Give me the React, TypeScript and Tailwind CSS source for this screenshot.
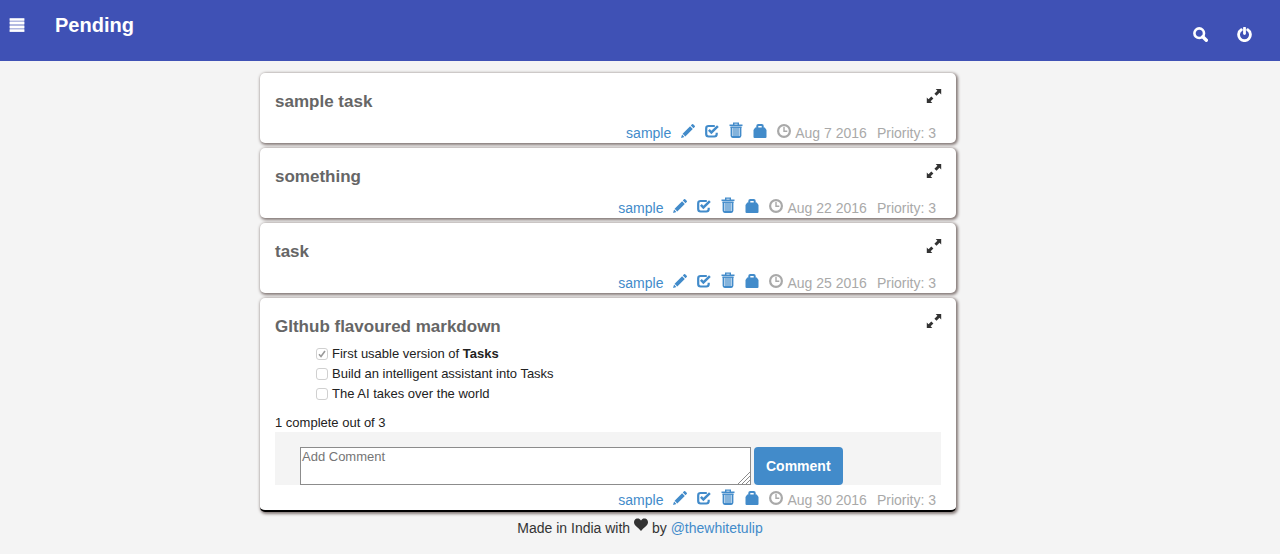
import type { ReactNode } from 'react';

type IconProps = { children: ReactNode; className?: string };

function Icon({ children, className = '' }: IconProps) {
  return (
    <svg viewBox="0 0 14 14" className={`h-3.5 w-3.5 shrink-0 fill-current ${className}`} aria-hidden="true">
      {children}
    </svg>
  );
}

const MenuIcon = () => (
  <svg viewBox="0 0 16 14" className="h-3.5 w-4 fill-current" aria-hidden="true">
    <path d="M.7 0h14.6v14H.7z" opacity=".6" />
    <path d="M.7 .5h14.6v2H.7zM.7 4h14.6v2H.7zM.7 8h14.6v2H.7zM.7 11.500h14.6v2.200H.7z" />
  </svg>
);

const SearchIcon = () => (
  <svg viewBox="0 0 15 15" className="size-[15px]" fill="none" stroke="currentColor" aria-hidden="true">
    <circle cx="6.2" cy="6.2" r="4.8" strokeWidth="2.6" />
    <path d="M9.8 9.8l3.500 3.500" strokeWidth="3.4" strokeLinecap="round" />
  </svg>
);

const PowerIcon = () => (
  <svg viewBox="0 0 15 15" className="size-[15px]" fill="none" stroke="currentColor" aria-hidden="true">
    <path d="M4.300 2.800a5.900 5.900 0 1 0 6.400 0" strokeWidth="2.8" strokeLinecap="round" />
    <path d="M7.500 1v5.500" strokeWidth="2.8" strokeLinecap="round" />
  </svg>
);

const ExpandIcon = () => (
  <svg viewBox="0 0 16 16" className="size-4 fill-current" aria-hidden="true">
    <path d="M9.700 1h5.500v5.500l-1.700-1.700-3 3-2.100-2.100 3-3zM.8 15V9.500l1.700 1.700 2.800-2.800 2.100 2.100-2.800 2.800L6.300 15z" />
  </svg>
);

const PencilIcon = () => (
  <Icon>
    <path d="M11 .3q.6-.6 1.2 0l1.500 1.500q.6.6 0 1.200l-1.200 1.200-2.700-2.700zM9.100 2.200l2.700 2.700-7.500 7.500-2.700-2.700zM1.100 10.600l2.300 2.300L0 14z" />
  </Icon>
);

const CheckIcon = () => (
  <Icon>
    <path
      d="M9.800 2H3.600Q1.200 2 1.200 4.400v5.700q0 2.400 2.400 2.400h5.700q2.400 0 2.400-2.400V8.800"
      fill="none"
      stroke="currentColor"
      strokeWidth="2.2"
    />
    <path d="M3.900 5.900l2.500 2.600 6.500-6.300" fill="none" stroke="currentColor" strokeWidth="2.500" />
  </Icon>
);

const TrashIcon = () => (
  <svg viewBox="0 0 14 16" className="h-4 w-3.5 shrink-0" fill="none" stroke="currentColor" aria-hidden="true">
    <path d="M.5 3.300h13" strokeWidth="1.6" />
    <path d="M4.700 3V1.100h4.600V3" strokeWidth="1.4" />
    <path d="M1.500 5.200h11" strokeWidth="1.400" />
    <path d="M2.500 5v8.800q0 1.200 1.200 1.200h6.600q1.200 0 1.200-1.200V5" strokeWidth="1.800" />
    <path d="M5 5.500v9M7 5.500v9M9 5.500v9" strokeWidth="1.300" />
  </svg>
);

const BagIcon = () => (
  <Icon>
    <path d="M4.300 4V2.100q0-1 1-1h3.400q1 0 1 1V4" fill="none" stroke="currentColor" strokeWidth="2" />
    <path d="M2.200 3.500h9.600l1.700 2.500V13q0 1-1 1h-11q-1 0-1-1V6z" />
  </Icon>
);

const ClockIcon = () => (
  <Icon>
    <circle cx="7" cy="7" r="5.900" fill="none" stroke="currentColor" strokeWidth="2.200" />
    <path d="M7 3v4.300h3.300" fill="none" stroke="currentColor" strokeWidth="1.400" />
  </Icon>
);

const HeartIcon = () => (
  <Icon className="text-[#333]">
    <path d="M7 2.600C8 .4 10 .2 11.300.6 13 1.100 14 2.600 14 4.400 14 7.500 9.200 9.600 7 13 4.800 9.600 0 7.500 0 4.400 0 2.600 1 1.100 2.700.6 4 .2 6 .4 7 2.600z" />
  </Icon>
);

const actions = [
  { label: 'Edit task', icon: <PencilIcon /> },
  { label: 'Complete task', icon: <CheckIcon /> },
  { label: 'Delete task', icon: <TrashIcon /> },
  { label: 'Archive task', icon: <BagIcon /> },
];

type TaskProps = { title: string; date: string; last?: boolean; children?: ReactNode };

function Task({ title, date, last = false, children }: TaskProps) {
  return (
    <li
      className={`rounded-[5px] bg-white px-[15px] shadow-[1px_1px_3px_1px_#857a78] ${
        last ? 'border-b-2 border-black' : ''
      }`}
    >
      <div className="flex items-start justify-between pt-[15px]">
        <h2 className="pt-1 text-[17px] leading-5 font-bold text-[#666]">{title}</h2>
        <button type="button" aria-label={`Expand ${title}`} className="-mr-px text-[#333]">
          <ExpandIcon />
        </button>
      </div>
      {children}
      <div className={`flex h-[19px] items-start justify-end gap-2.5 pr-[5px] leading-[18px] ${children ? 'mt-1.5' : 'mt-3'}`}>
        <a href="#sample" className="text-[#428bca]">sample</a>
        {actions.map((action) => (
          <a key={action.label} href="#task" aria-label={action.label} className="flex h-3.5 items-end text-[#428bca]">
            {action.icon}
          </a>
        ))}
        <span className="flex gap-1 text-[#a9a9a9]">
          <ClockIcon />
          {date}
        </span>
        <span className="text-[#a9a9a9]">Priority: 3</span>
      </div>
    </li>
  );
}

function CheckItem({ checked = false, children }: { checked?: boolean; children: ReactNode }) {
  return (
    <li>
      <label className="flex items-center gap-1">
        <span className="grid">
          <input
            type="checkbox"
            disabled
            defaultChecked={checked}
            className="col-start-1 row-start-1 size-3 appearance-none rounded-[3px] border border-[#d0d0d0] bg-white"
          />
          {checked && (
            <svg viewBox="0 0 12 12" className="col-start-1 row-start-1 size-3" fill="none" stroke="#999" strokeWidth="1.6" aria-hidden="true">
              <path d="M3 6.300l2 2.200L9 3" />
            </svg>
          )}
        </span>
        <span>{children}</span>
      </label>
    </li>
  );
}

export default function App() {
  return (
    <div className="min-h-screen bg-[#f4f4f4] font-['Liberation_Sans',Arial,sans-serif] text-sm text-[#333]">
      <header className="flex h-[61px] items-start justify-between bg-[#3f51b5] pr-7 pl-[9px] text-white">
        <div className="flex items-start">
          <button type="button" aria-label="Menu" className="pt-[18px]">
            <MenuIcon />
          </button>
          <h1 className="pt-3 pl-[30px] text-xl leading-[26px] font-bold">Pending</h1>
        </div>
        <nav className="flex gap-[29px] pt-[27px]">
          <a href="#search" aria-label="Search"><SearchIcon /></a>
          <a href="#logout" aria-label="Log out"><PowerIcon /></a>
        </nav>
      </header>
      <main className="mx-auto max-w-[760px] pt-3 pr-16">
        <ul className="flex flex-col gap-[5px]">
          <Task title="sample task" date="Aug 7 2016" />
          <Task title="something" date="Aug 22 2016" />
          <Task title="task" date="Aug 25 2016" />
          <Task title="GIthub flavoured markdown" date="Aug 30 2016" last>
            <div className="text-[13px] leading-5 text-[#222]">
              <ul className="mt-[7px] mb-2.5 pl-[41px]">
                <CheckItem checked>First usable version of <b>Tasks</b></CheckItem>
                <CheckItem>Build an intelligent assistant into Tasks</CheckItem>
                <CheckItem>The AI takes over the world</CheckItem>
              </ul>
              <p className="leading-[18px]">1 complete out of 3</p>
              <form className="flex gap-[3px] bg-[#f4f4f4] pt-[15px] pl-[25px]">
                <div className="relative flex w-[451px]">
                  <textarea
                    aria-label="Add Comment"
                    placeholder="Add Comment"
                    className="h-[38px] w-full border border-[#8c8c8c] bg-white px-px leading-[18px] placeholder:text-[#757575]"
                  />
                  <svg
                    viewBox="0 0 14 14"
                    className="pointer-events-none absolute right-px bottom-px size-3.5 bg-white"
                    stroke="#8c8c8c"
                    aria-hidden="true"
                  >
                    <path d="M2 14L14 2M6 14l8-8M10 14l4-4" />
                  </svg>
                </div>
                <button type="button" className="h-[38px] rounded bg-[#428bca] px-3 text-sm font-bold text-white">
                  Comment
                </button>
              </form>
            </div>
          </Task>
        </ul>
      </main>
      <footer className="flex justify-center pt-1.5 leading-5">
        <span>Made in India with&nbsp;</span>
        <HeartIcon />
        <span>&nbsp;by <a href="#thewhitetulip" className="text-[#428bca]">@thewhitetulip</a></span>
      </footer>
    </div>
  );
}
